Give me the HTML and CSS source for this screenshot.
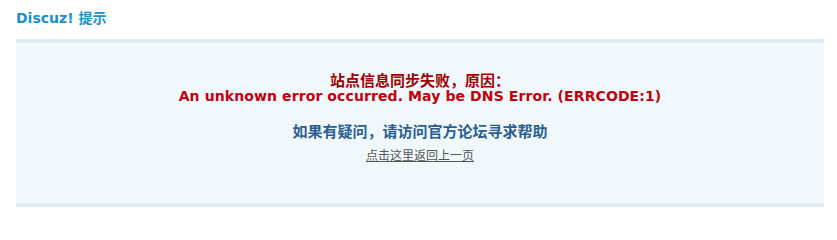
FILE: index.html
```html
<!DOCTYPE html>
<html lang="zh-CN">
<head>
<meta charset="utf-8">
<title>Discuz! 提示</title>
<link rel="stylesheet" href="styles.css">
</head>
<body>
<div class="wrap">
  <h3 class="title">Discuz! 提示</h3>
  <div class="alert">
    <p class="err-cn">站点信息同步失败，原因：</p>
    <p class="err-en">An unknown error occurred. May be DNS Error. (ERRCODE:1)</p>
    <p class="help">如果有疑问，请访问官方论坛寻求帮助</p>
    <p class="back"><a href="#">点击这里返回上一页</a></p>
  </div>
</div>
</body>
</html>
```

FILE: styles.css
```css
html, body {
  margin: 0;
  padding: 0;
  background: #ffffff;
}
body {
  font-family: "DejaVu Sans", "Noto Sans CJK SC", sans-serif;
}
.wrap {
  width: 808px;
  margin: 0 0 0 16px;
}
.title {
  margin: 0;
  padding-top: 10px;
  height: 39px;
  box-sizing: border-box;
  font-size: 14px;
  line-height: 17px;
  font-weight: bold;
  color: #1a8fc9;
}
.alert {
  background: #f1f8fc;
  border-top: 4px solid #deebf5;
  border-bottom: 4px solid #deebf5;
  padding: 28px 0 41px;
  text-align: center;
}
.alert p {
  margin: 0;
}
.err-cn {
  font-family: "Noto Sans CJK SC", sans-serif;
  font-size: 15px;
  line-height: 17px;
  font-weight: bold;
  color: #a00000;
}
.err-en {
  font-family: "DejaVu Sans", sans-serif;
  font-size: 14px;
  line-height: 17px;
  font-weight: bold;
  color: #c4000c;
  letter-spacing: 0.1px;
}
.help {
  margin-top: 17px !important;
  font-family: "Noto Sans CJK SC", sans-serif;
  font-size: 15px;
  line-height: 17px;
  font-weight: bold;
  color: #2a5e93;
}
.back {
  margin-top: 8px !important;
  font-family: "Noto Sans CJK SC", sans-serif;
  font-size: 12px;
  line-height: 15px;
}
.back a {
  color: #555555;
  text-decoration: underline;
}
```
